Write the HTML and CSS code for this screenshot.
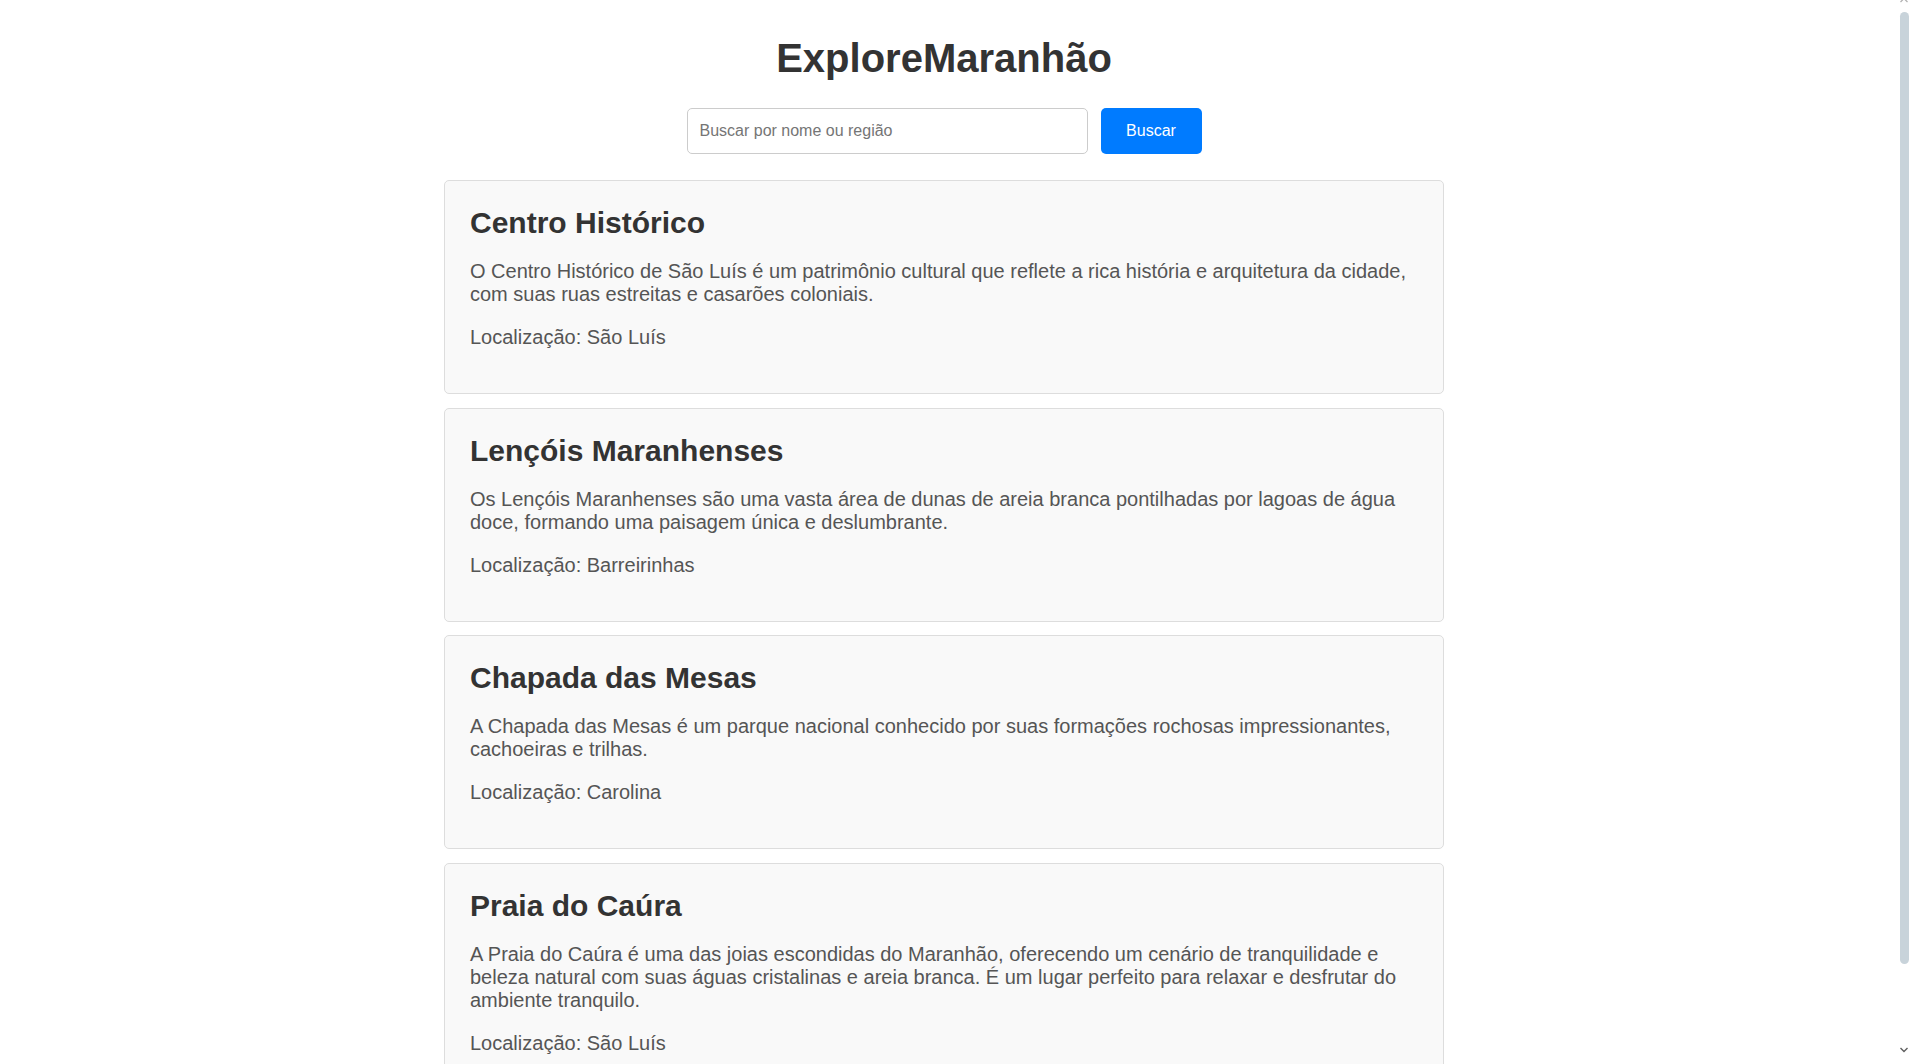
FILE: index.html
```html
<!DOCTYPE html>
<html lang="pt-BR">
<head>
<meta charset="utf-8">
<title>ExploreMaranhão</title>
<link rel="stylesheet" href="styles.css">
</head>
<body>
<div class="page">
  <header class="header">
    <h1 class="title">ExploreMaranhão</h1>
    <form class="search" onsubmit="return false;">
      <input class="search-input" type="text" placeholder="Buscar por nome ou região">
      <button class="search-btn" type="submit">Buscar</button>
    </form>
  </header>
  <main class="list">
    <article class="card">
      <h2 class="card-title">Centro Histórico</h2>
      <p class="card-text">O Centro Histórico de São Luís é um patrimônio cultural que reflete a rica história e arquitetura da cidade, com suas ruas estreitas e casarões coloniais.</p>
      <p class="card-text">Localização: São Luís</p>
    </article>
    <article class="card">
      <h2 class="card-title">Lençóis Maranhenses</h2>
      <p class="card-text">Os Lençóis Maranhenses são uma vasta área de dunas de areia branca pontilhadas por lagoas de água doce, formando uma paisagem única e deslumbrante.</p>
      <p class="card-text">Localização: Barreirinhas</p>
    </article>
    <article class="card">
      <h2 class="card-title">Chapada das Mesas</h2>
      <p class="card-text">A Chapada das Mesas é um parque nacional conhecido por suas formações rochosas impressionantes, cachoeiras e trilhas.</p>
      <p class="card-text">Localização: Carolina</p>
    </article>
    <article class="card">
      <h2 class="card-title">Praia do Caúra</h2>
      <p class="card-text">A Praia do Caúra é uma das joias escondidas do Maranhão, oferecendo um cenário de tranquilidade e beleza natural com suas águas cristalinas e areia branca. É um lugar perfeito para relaxar e desfrutar do ambiente tranquilo.</p>
      <p class="card-text">Localização: São Luís</p>
    </article>
  </main>
</div>
<div class="scrollbar" aria-hidden="true">
  <svg class="scroll-arrow scroll-arrow-up" width="10" height="6" viewBox="0 0 10 6"><path d="M1.5 5 L5 1.5 L8.5 5" fill="none" stroke="#b0b0b0" stroke-width="1.2"/></svg>
  <div class="scroll-thumb"></div>
  <svg class="scroll-arrow scroll-arrow-down" width="10" height="6" viewBox="0 0 10 6"><path d="M1.5 1 L5 4.5 L8.5 1" fill="none" stroke="#5f5f5f" stroke-width="1.4"/></svg>
</div>
</body>
</html>
```

FILE: styles.css
```css
html {
  scrollbar-width: none;
}

html::-webkit-scrollbar {
  display: none;
}

body {
  margin: 0;
  font-family: "Liberation Sans", Arial, sans-serif;
  font-size: 20px;
  color: #333333;
  background: #ffffff;
}

.page {
  padding-right: 30px;
}

.header {
  display: flex;
  flex-direction: column;
  align-items: center;
}

.title {
  margin: 36px 0 27px;
  font-size: 40px;
  font-weight: bold;
  line-height: normal;
  color: #333333;
}

.search {
  display: flex;
  justify-content: center;
  gap: 13px;
  margin: 0 0 26px;
}

.search-input {
  box-sizing: border-box;
  width: 401px;
  height: 46px;
  padding: 0 12px;
  border: 1px solid #cccccc;
  border-radius: 5px;
  font-family: "Liberation Sans", Arial, sans-serif;
  font-size: 16px;
  color: #333333;
  background: #ffffff;
  outline: none;
}

.search-input::placeholder {
  color: #757575;
}

.search-btn {
  box-sizing: border-box;
  width: 101px;
  height: 46px;
  padding: 0;
  border: none;
  border-radius: 5px;
  background: #007bff;
  color: #ffffff;
  font-family: "Liberation Sans", Arial, sans-serif;
  font-size: 16px;
  cursor: pointer;
}

.list {
  width: 1000px;
  margin: 0 auto;
  padding-bottom: 50px;
}

.card {
  background: #f9f9f9;
  border: 1px solid #dddddd;
  border-radius: 5px;
  padding: 25px 24px 24px 25px;
  margin-bottom: 13.5px;
}

.card-title {
  margin: 0 0 20px;
  font-size: 30px;
  font-weight: bold;
  line-height: normal;
  color: #333333;
}

.card-text {
  margin: 0 0 20px;
  line-height: normal;
  color: #555555;
}

/* decorative overlay scrollbar */
.scrollbar {
  position: fixed;
  top: 0;
  right: 0;
  bottom: 0;
  width: 30px;
  background: #ffffff;
}

.scroll-thumb {
  position: absolute;
  top: 12px;
  left: 12px;
  width: 9px;
  height: 952px;
  border-radius: 5px;
  background: #c8d3da;
}

.scroll-arrow {
  position: absolute;
  left: 11px;
}

.scroll-arrow-up {
  top: -3px;
}

.scroll-arrow-down {
  top: 1047px;
}
```
